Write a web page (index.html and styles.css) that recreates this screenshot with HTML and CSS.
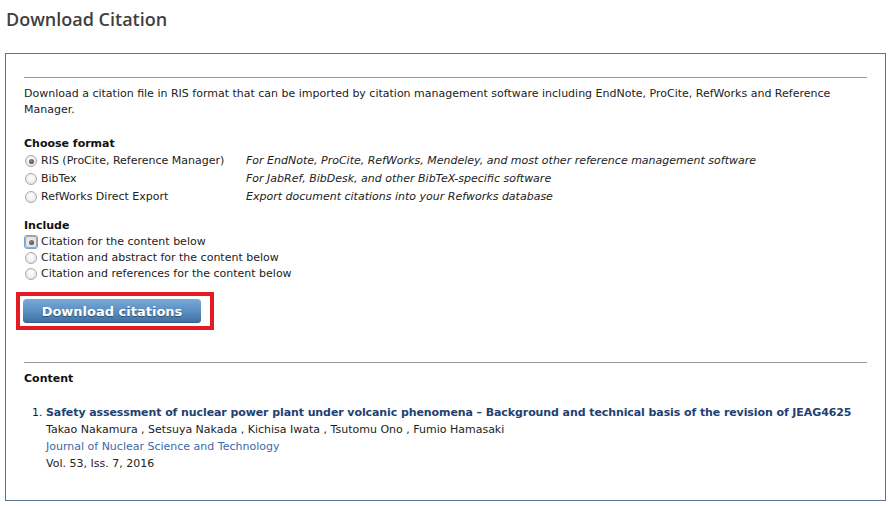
FILE: index.html
```html
<!DOCTYPE html>
<html>
<head>
<meta charset="utf-8">
<title>Download Citation</title>
<link rel="stylesheet" href="styles.css">
</head>
<body>
<h1 class="page-title">Download Citation</h1>
<div class="panel">
  <hr class="rule">
  <p class="intro">Download a citation file in RIS format that can be imported by citation management software including EndNote, ProCite, RefWorks and Reference Manager.</p>

  <div class="group">
    <div class="group-title">Choose format</div>
    <div class="opt fmt"><span class="radio checked"></span><span class="label">RIS (ProCite, Reference Manager)</span><span class="desc">For EndNote, ProCite, RefWorks, Mendeley, and most other reference management software</span></div>
    <div class="opt fmt"><span class="radio"></span><span class="label">BibTex</span><span class="desc">For JabRef, BibDesk, and other BibTeX-specific software</span></div>
    <div class="opt fmt"><span class="radio"></span><span class="label">RefWorks Direct Export</span><span class="desc">Export document citations into your Refworks database</span></div>
  </div>

  <div class="group include">
    <div class="group-title">Include</div>
    <div class="opt inc"><span class="radio checked focus"></span><span class="label">Citation for the content below</span></div>
    <div class="opt inc"><span class="radio"></span><span class="label">Citation and abstract for the content below</span></div>
    <div class="opt inc"><span class="radio"></span><span class="label">Citation and references for the content below</span></div>
  </div>

  <div class="highlight"><button class="btn">Download citations</button></div>

  <hr class="rule rule2">
  <div class="group-title">Content</div>
  <ol class="items">
    <li>
      <div class="item-title">Safety assessment of nuclear power plant under volcanic phenomena – Background and technical basis of the revision of JEAG4625</div>
      <div>Takao Nakamura , Setsuya Nakada , Kichisa Iwata , Tsutomu Ono , Fumio Hamasaki</div>
      <div class="journal">Journal of Nuclear Science and Technology</div>
      <div>Vol. 53, Iss. 7, 2016</div>
    </li>
  </ol>
</div>
</body>
</html>
```

FILE: styles.css
```css
html, body { margin: 0; padding: 0; background: #fff; }
body {
  font-family: "DejaVu Sans", Verdana, sans-serif;
  font-size: 11px;
  line-height: 16px;
  color: #222;
}
.page-title {
  margin: 0;
  padding: 7px 6px 0;
  font-family: "Open Sans", "DejaVu Sans", sans-serif;
  font-weight: 600;
  font-size: 18px;
  line-height: 24px;
  color: #3f3f3f;
}
.panel {
  margin: 22px 3px 0 5px;
  border: 1px solid #5b7393;
  padding: 23px 18px 28px;
}
.rule {
  margin: 0;
  border: 0;
  border-top: 1px solid #9a9a9a;
  height: 0;
}
.intro { margin: 8px 0 0; }
.group { margin-top: 18px; }
.group-title { font-weight: bold; color: #111; }
.opt { display: flex; align-items: center; }
.fmt { height: 18px; }
.inc { height: 16px; }
.include { margin-top: 12px; }
.radio {
  box-sizing: border-box;
  width: 12px; height: 12px;
  border-radius: 50%;
  border: 1px solid #a9a9a9;
  background: radial-gradient(circle at 50% 40%, #ffffff 0, #f0f0f0 50%, #dcdcdc 100%);
  margin: 0 4px 0 1px;
  flex: none;
  position: relative;
}
.radio.checked::after {
  content: "";
  position: absolute;
  left: 2.5px; top: 2.5px;
  width: 5px; height: 5px;
  border-radius: 50%;
  background: radial-gradient(circle at 40% 35%, #8a8a8a, #3d3d3d);
}
.radio.focus {
  outline: 1px solid #7da2ce;
  outline-offset: 0px;
  border-radius: 2px;
  background: radial-gradient(circle, #f4f4f4 0, #e2e2e2 70%, #cfd9e6 100%);
}
.fmt .label { width: 205px; flex: none; }
.desc { font-style: italic; }
.highlight {
  display: inline-block;
  margin: 10px 0 0 -8px;
  border: 4px solid #e31b23;
  padding: 3px 9px 3px 3px;
  line-height: 0;
}
.btn {
  width: 178px;
  height: 24px;
  border: 0;
  border-radius: 4px;
  background: linear-gradient(#78a9d8, #5b8fc2 50%, #3f6f9f);
  box-shadow: inset 0 -1px 0 #345f8a;
  color: #fff;
  font-family: "DejaVu Sans", Verdana, sans-serif;
  font-weight: bold;
  font-size: 13px;
  text-shadow: 0 1px 1px #2c4e70;
  padding: 0;
}
.rule2 { margin-top: 32px; }
.rule2 + .group-title { margin-top: 8px; }
.items {
  margin: 17px 0 0;
  padding-left: 22px;
  line-height: 17px;
}
.item-title { font-weight: bold; color: #233f72; letter-spacing: -0.09px; }
.journal { color: #3a6aa8; }
```
